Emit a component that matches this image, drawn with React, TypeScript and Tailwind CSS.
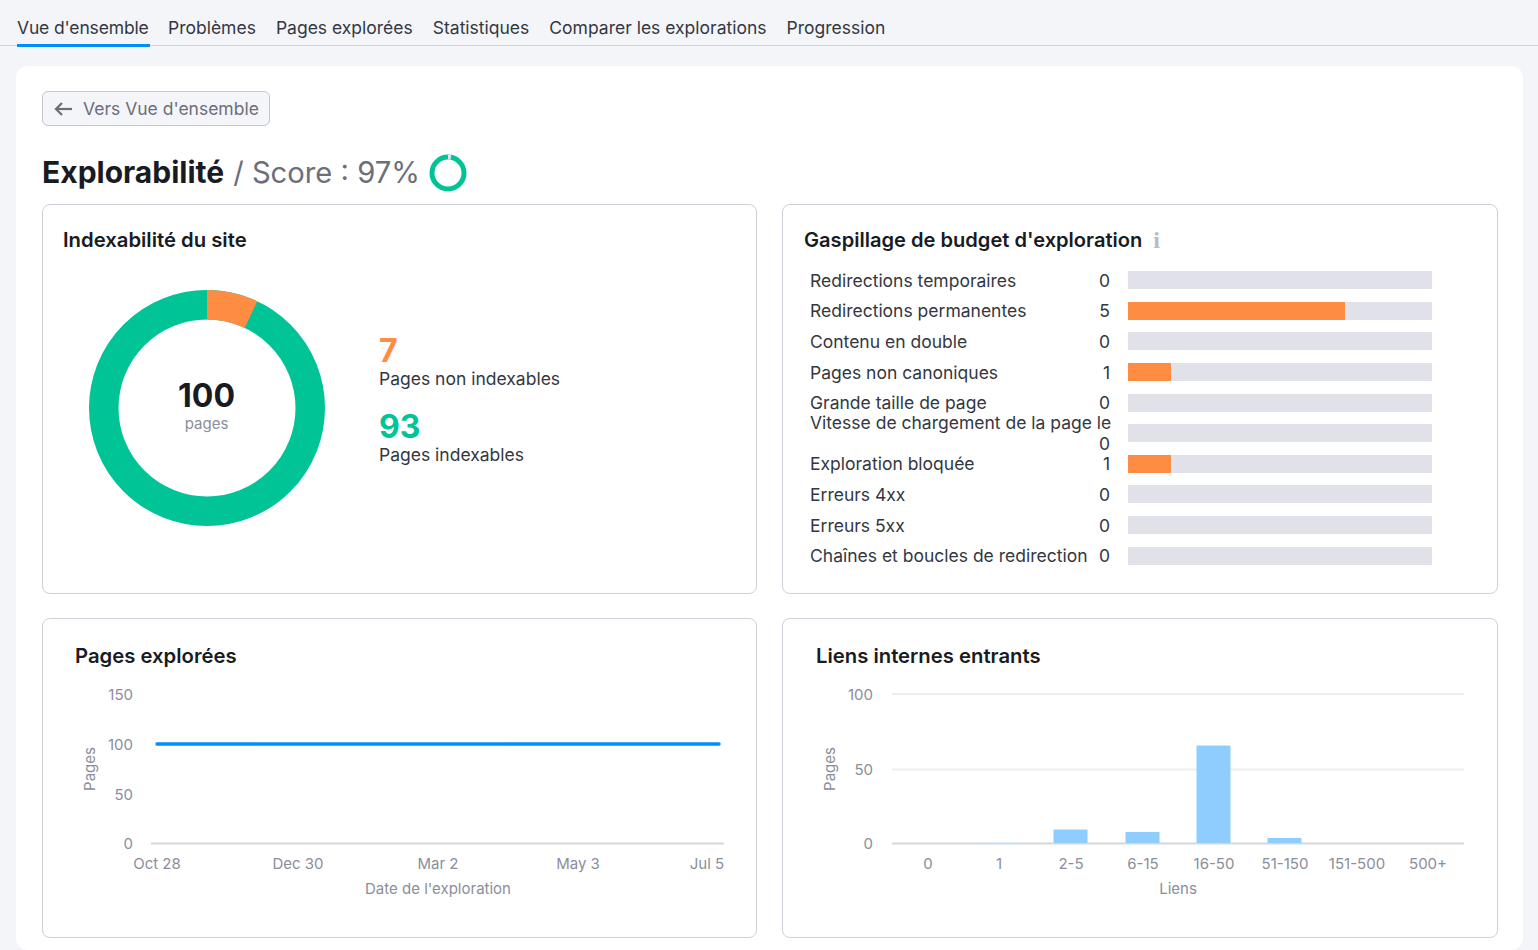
const TABS = ["Vue d'ensemble", 'Problèmes', 'Pages explorées', 'Statistiques', 'Comparer les explorations', 'Progression']

const WASTE: { label: string; value: number; pct: number }[] = [
  { label: 'Redirections temporaires', value: 0, pct: 0 },
  { label: 'Redirections permanentes', value: 5, pct: 71.3 },
  { label: 'Contenu en double', value: 0, pct: 0 },
  { label: 'Pages non canoniques', value: 1, pct: 14 },
  { label: 'Grande taille de page', value: 0, pct: 0 },
  { label: 'Vitesse de chargement de la page le', value: 0, pct: 0 },
  { label: 'Exploration bloquée', value: 1, pct: 14 },
  { label: 'Erreurs 4xx', value: 0, pct: 0 },
  { label: 'Erreurs 5xx', value: 0, pct: 0 },
  { label: 'Chaînes et boucles de redirection', value: 0, pct: 0 },
]

const LINE_X = [
  { x: 115, t: 'Oct 28' },
  { x: 256, t: 'Dec 30' },
  { x: 396, t: 'Mar 2' },
  { x: 536, t: 'May 3' },
  { x: 665, t: 'Jul 5' },
]

const BARS = [
  { x: 146, t: '0', top: 174 },
  { x: 217, t: '1', top: 173 },
  { x: 289, t: '2-5', top: 160.5 },
  { x: 361, t: '6-15', top: 163 },
  { x: 432, t: '16-50', top: 76.5 },
  { x: 503, t: '51-150', top: 169 },
  { x: 575, t: '151-500', top: 174 },
  { x: 646, t: '500+', top: 174 },
]

const C = 2 * Math.PI * 103.25

function Donut() {
  return (
    <svg width="238" height="238" viewBox="0 0 238 238" className="block">
      <circle cx="119" cy="119" r="103.25" fill="none" stroke="#00c495" strokeWidth="29.5" />
      <circle
        cx="119"
        cy="119"
        r="103.25"
        fill="none"
        stroke="#ff8c43"
        strokeWidth="29.5"
        strokeDasharray={`${C * 0.07} ${C * 0.93}`}
        transform="rotate(-90 119 119)"
      />
    </svg>
  )
}

function ScoreRing() {
  const c = 2 * Math.PI * 16
  return (
    <svg width="38" height="38" viewBox="0 0 38 38" className="block">
      <circle cx="19" cy="19" r="16" fill="none" stroke="#00c495" strokeWidth="5" />
      <circle
        cx="19"
        cy="19"
        r="16"
        fill="none"
        stroke="#e0e1e9"
        strokeWidth="5"
        strokeDasharray={`${c * 0.03} ${c * 0.97}`}
        transform="rotate(-90 19 19)"
      />
    </svg>
  )
}

function LineChart() {
  return (
    <svg width="713" height="260" viewBox="0 0 713 260" className="-ml-px -mt-px block font-['Inter',sans-serif] text-[15px]">
      <g fill="#8a8e9b" textAnchor="end">
        <text x="91" y="30.5">150</text>
        <text x="91" y="80.5">100</text>
        <text x="91" y="130.5">50</text>
        <text x="91" y="179.5">0</text>
      </g>
      <line x1="109" x2="682" y1="174.5" y2="174.5" stroke="#d5d7df" strokeWidth="2" />
      <line x1="115" x2="677" y1="75" y2="75" stroke="#008ff8" strokeWidth="3.5" strokeLinecap="round" />
      <g fill="#8a8e9b" textAnchor="middle">
        {LINE_X.map((l) => (
          <text key={l.t} x={l.x} y="200">
            {l.t}
          </text>
        ))}
        <text x="396" y="225">
          Date de l'exploration
        </text>
        <text transform="translate(53 100) rotate(-90)">Pages</text>
      </g>
    </svg>
  )
}

function BarChart() {
  return (
    <svg width="714" height="260" viewBox="0 0 714 260" className="-ml-px -mt-px block font-['Inter',sans-serif] text-[15px]">
      <g fill="#8a8e9b" textAnchor="end">
        <text x="91" y="30.5">100</text>
        <text x="91" y="105.5">50</text>
        <text x="91" y="179.5">0</text>
      </g>
      <line x1="110" x2="682" y1="25" y2="25" stroke="#ecedf2" strokeWidth="2" />
      <line x1="110" x2="682" y1="100.5" y2="100.5" stroke="#ecedf2" strokeWidth="2" />
      <line x1="110" x2="682" y1="174.5" y2="174.5" stroke="#d5d7df" strokeWidth="2" />
      {BARS.filter((b) => b.top < 174).map((b) => (
        <rect
          key={b.t}
          x={b.x - 17.5}
          y={b.top}
          width="34"
          height={174 - b.top}
          fill={b.t === '1' ? '#dceffd' : '#8fcdff'}
        />
      ))}
      <g fill="#8a8e9b" textAnchor="middle">
        {BARS.map((b) => (
          <text key={b.t} x={b.x} y="200">
            {b.t}
          </text>
        ))}
        <text x="396" y="225">
          Liens
        </text>
        <text transform="translate(53 100) rotate(-90)">Pages</text>
      </g>
    </svg>
  )
}

export default function App() {
  return (
    <div className="h-[950px] overflow-hidden bg-[#f4f5f9] font-['Inter',sans-serif] text-[#333742]">
      <div className="flex h-[46px] gap-5 border-b border-[#d1d4db] pl-[16px] text-[17.5px]">
        {TABS.map((t, i) => (
          <div
            key={t}
            className={`flex h-[47px] items-center pt-[9px] ${i === 0 ? '-mr-[2px] ml-px w-[133px] whitespace-nowrap border-b-[3px] border-[#008ff8] pt-[12px] tracking-[-0.15px]' : ''}`}
          >
            {t}
          </div>
        ))}
      </div>

      <div className="ml-[16px] mr-[15px] mt-5 h-[884px] rounded-xl bg-white px-[26px] pt-[25px]">
        <button
          type="button"
          className="flex h-[35px] items-center gap-[11px] rounded-md border border-[#c4c7cf] bg-[#f4f5f9] pl-[11px] pr-[10px] text-[17.5px] text-[#6c6e79]"
        >
          <svg width="18" height="14" viewBox="0 0 18 14" fill="none" stroke="currentColor" strokeWidth="2.2" className="block">
            <path d="M18 7H2" />
            <path d="M8 1 2 7l6 6" />
          </svg>
          <span className="pt-px">Vers Vue d'ensemble</span>
        </button>

        <div className="mb-[10px] mt-[25px] flex h-[43px] items-center text-[30px] text-[#6c6e79]">
          <span className="font-bold text-[#191b23]">Explorabilité</span>
          <span className="ml-[9px] text-[29.2px]">/ Score : 97%</span>
          <span className="ml-[9px]">
            <ScoreRing />
          </span>
        </div>

        <div className="grid grid-cols-[715px_716px] gap-x-[25px] gap-y-[24px]">
          <section className="h-[390px] rounded-lg border border-[#cdd0d8] px-5 pt-[21px]">
            <h2 className="text-[20.3px] font-semibold leading-7 text-[#191b23]">Indexabilité du site</h2>
            <div className="mt-[35px] flex items-center pl-[24.5px]">
              <div className="relative">
                <Donut />
                <div className="absolute inset-0 flex flex-col items-center justify-center pb-[5px]">
                  <span className="text-[32px] font-bold leading-9 text-[#191b23]">100</span>
                  <span className="text-[15px] leading-5 text-[#8a8e9b]">pages</span>
                </div>
              </div>
              <div className="ml-[53.5px] flex flex-col pb-[18px]">
                <span className="-mb-px pt-px text-[32px] font-bold leading-9 text-[#ff8c43]">7</span>
                <span className="text-[17.5px] leading-[22px]">Pages non indexables</span>
                <span className="-mb-px mt-[18px] pt-px text-[32px] font-bold leading-9 text-[#00c495]">93</span>
                <span className="text-[17.5px] leading-[22px]">Pages indexables</span>
              </div>
            </div>
          </section>

          <section className="h-[390px] rounded-lg border border-[#cdd0d8] pl-[21px] pt-[21px]">
            <h2 className="flex h-7 items-center text-[20.1px] font-semibold leading-7 text-[#191b23]">
              Gaspillage de budget d'exploration
              <span className="ml-[11px] font-['Liberation_Serif',serif] text-[24px] font-bold text-[#b8bbc6]">i</span>
            </h2>
            <div className="mt-[11px] flex flex-col pl-[6px]">
              {WASTE.map((r) => (
                <div key={r.label} className="flex h-[30.6px] items-center">
                  <div className="flex w-[303px] flex-wrap text-[17.5px] leading-[21px]">
                    <span className="whitespace-nowrap">{r.label}</span>
                    <span className="ml-auto pr-[3px]">{r.value}</span>
                  </div>
                  <div className="ml-[15px] h-[18px] w-[304px] bg-[#e0e1e9]">
                    <div className="h-full bg-[#ff8c43]" style={{ width: `${r.pct}%` }} />
                  </div>
                </div>
              ))}
            </div>
          </section>

          <section className="h-[320px] rounded-lg border border-[#cdd0d8]">
            <h2 className="pl-[32px] pt-[23px] text-[20.3px] font-semibold leading-7 text-[#191b23]">Pages explorées</h2>
            <LineChart />
          </section>

          <section className="h-[320px] rounded-lg border border-[#cdd0d8]">
            <h2 className="pl-[33px] pt-[23px] text-[20.3px] font-semibold leading-7 text-[#191b23]">Liens internes entrants</h2>
            <BarChart />
          </section>
        </div>
      </div>
    </div>
  )
}
